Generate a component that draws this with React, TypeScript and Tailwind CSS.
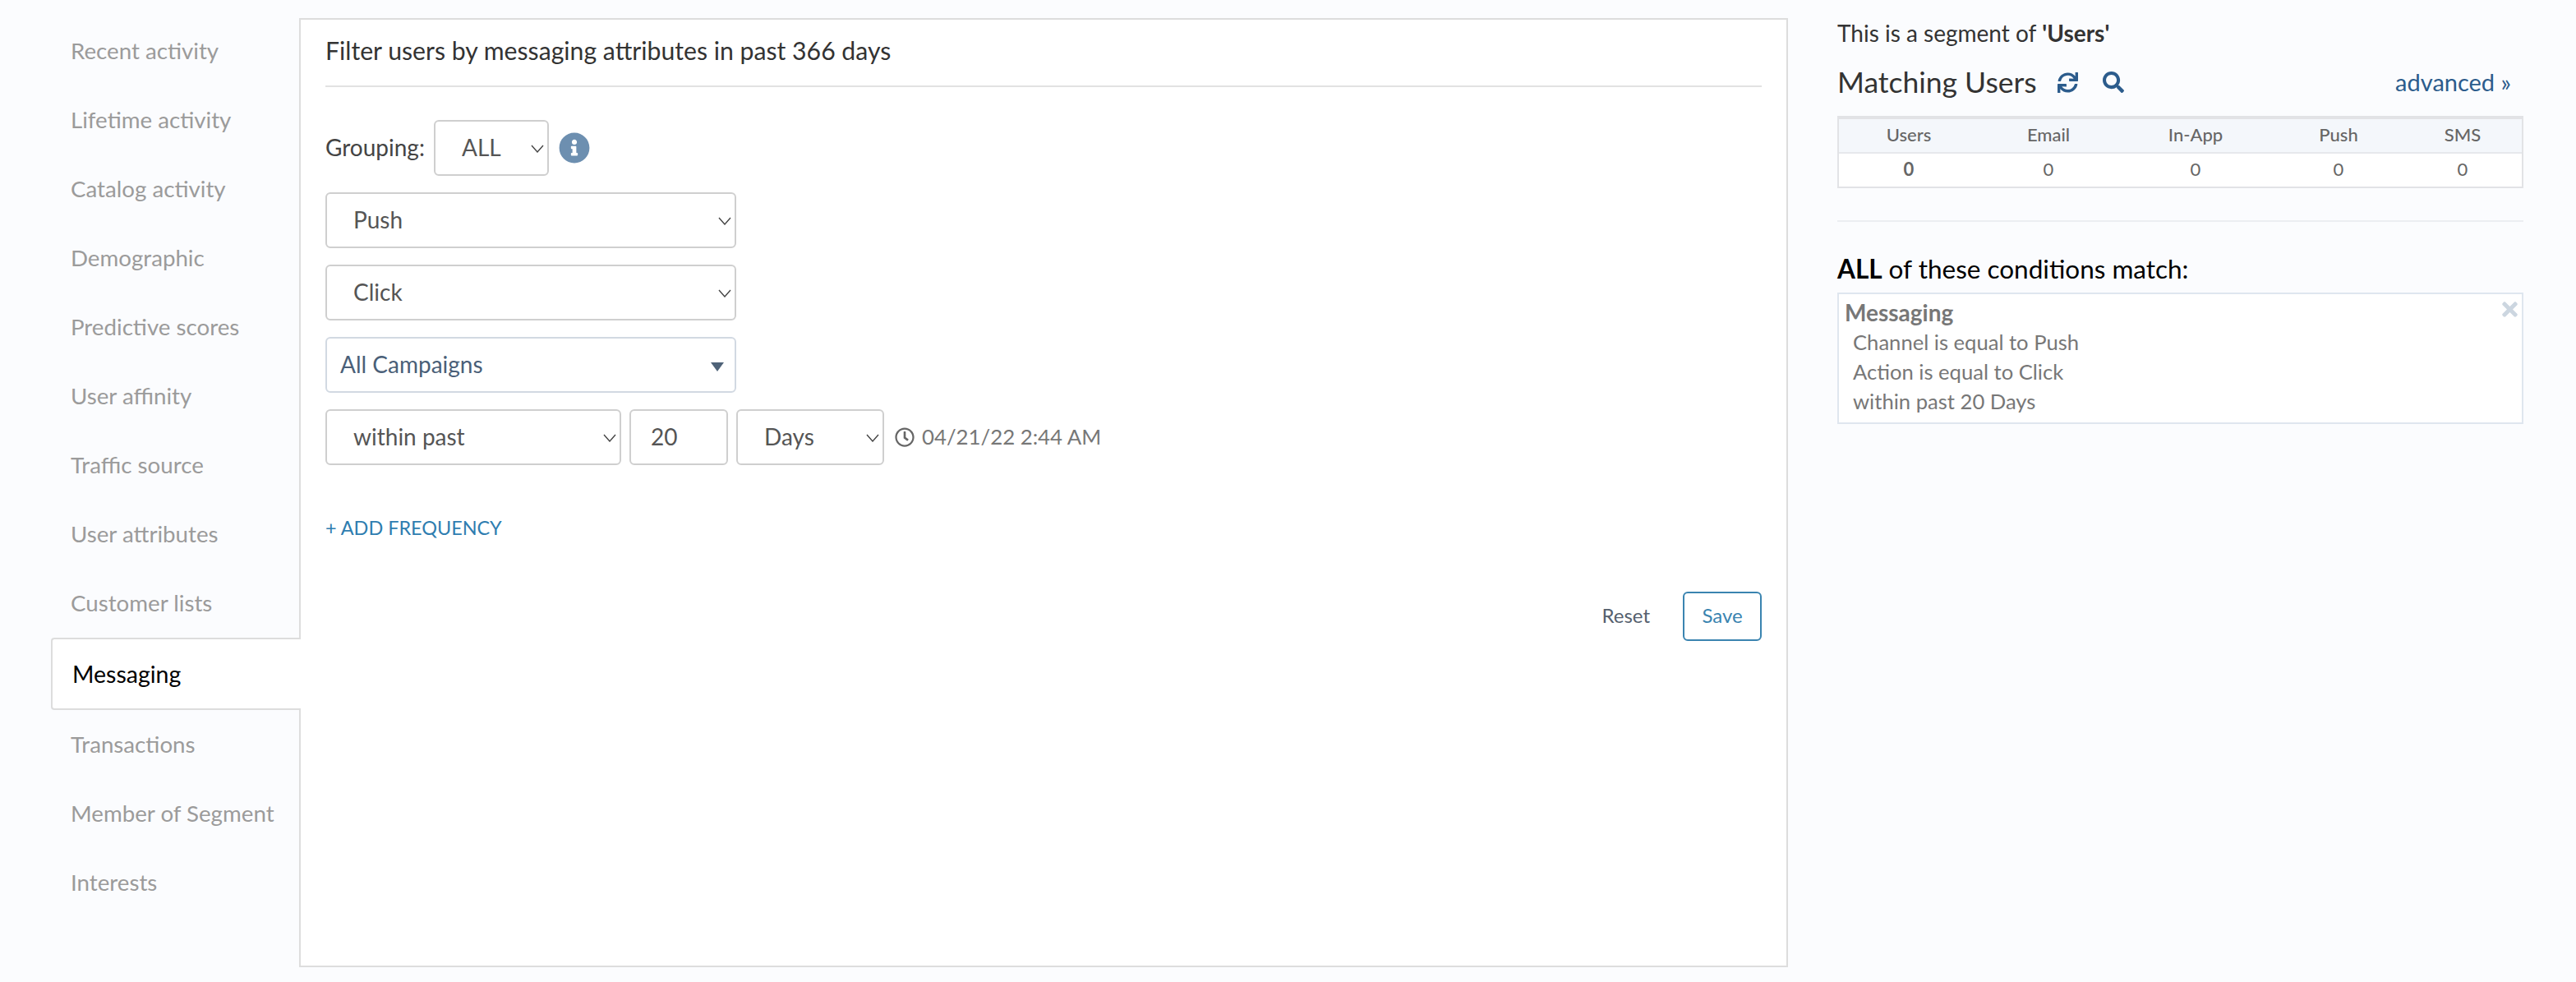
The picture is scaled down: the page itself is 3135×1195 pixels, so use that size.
// App.tsx
// Segment filter builder: category list, messaging filter form, matching users summary

import { FaInfoCircle, FaRegClock, FaSync, FaSearch, FaTimes } from 'react-icons/fa';

const categories = [
  'Recent activity',
  'Lifetime activity',
  'Catalog activity',
  'Demographic',
  'Predictive scores',
  'User affinity',
  'Traffic source',
  'User attributes',
  'Customer lists',
  'Messaging',
  'Transactions',
  'Member of Segment',
  'Interests',
];

const counts = [
  { label: 'Users', width: 'w-[170px]', bold: true },
  { label: 'Email', width: 'w-[170px]', bold: false },
  { label: 'In-App', width: 'w-[188px]', bold: false },
  { label: 'Push', width: 'w-[160px]', bold: false },
  { label: 'SMS', width: 'w-[142px]', bold: false },
];

function Select({ value, className }: { value: string; className: string }) {
  return (
    <div className={`relative h-[68px] shrink-0 ${className}`}>
      <select
        defaultValue={value}
        className="w-full h-full appearance-none bg-white border-2 border-[#cfcfcf] rounded-[6px] pl-[32px] pb-[2px] text-[28px] text-[#555555] outline-none"
      >
        <option>{value}</option>
      </select>
      <svg
        className="absolute right-[6px] top-[30px] w-[16px] h-[10px] pointer-events-none"
        viewBox="0 0 16 10"
        fill="none"
        stroke="#444444"
        strokeWidth="1.4"
      >
        <path d="M1 1l7 8 7-8" />
      </svg>
    </div>
  );
}

export default function App() {
  return (
    <div className="w-[3135px] h-[1195px] flex bg-[#fbfcfe] font-['Lato',sans-serif] overflow-hidden">
      {/* Category list */}
      <nav className="w-[364px] shrink-0 pl-[62px] pt-[20px]">
        {categories.map((name) =>
          name === 'Messaging' ? (
            <div
              key={name}
              className="relative z-10 h-[88px] -mr-[2px] flex items-center pl-[24px] bg-white border-2 border-r-0 border-[#dddddd] rounded-l-[4px] text-[28.5px] text-black"
            >
              {name}
            </div>
          ) : (
            <div key={name} className="h-[84px] pb-[1px] flex items-center pl-[24px] text-[27.7px] text-[#9b9b9b]">
              {name}
            </div>
          ),
        )}
      </nav>

      {/* Filter panel */}
      <main className="w-[1812px] h-[1155px] mt-[22px] shrink-0 bg-white border-2 border-[#dddddd] pl-[30px] pr-[30px]">
        <h2 className="h-[82px] flex items-center border-b-2 border-[#e2e2e2] text-[30.2px] font-normal text-[#333333] pb-[5px]">
          Filter users by messaging attributes in past 366 days
        </h2>

        <div className="mt-[40px] flex flex-col gap-[20px]">
          <div className="flex items-center">
            <span className="text-[28px] text-[#444444] w-[132px] pb-[2px]">Grouping:</span>
            <Select value="ALL" className="w-[140px]" />
            <FaInfoCircle className="ml-[12px] w-[38px] h-[38px] text-[#6d8fb0]" />
          </div>

          <Select value="Push" className="w-[500px]" />
          <Select value="Click" className="w-[500px]" />

          <div className="relative w-[500px] h-[68px] bg-white border-2 border-[#d2d9e2] rounded-[6px] flex items-center pl-[16px] pb-[2px] text-[28px] text-[#4a5f78]">
            All Campaigns
            <svg className="absolute right-[13px] top-[29px] w-[16px] h-[11px]" viewBox="0 0 16 11" fill="#4f6378">
              <path d="M0 0h16L8 11z" />
            </svg>
          </div>

          <div className="flex items-center">
            <Select value="within past" className="w-[360px]" />
            <input
              defaultValue="20"
              className="ml-[10px] w-[120px] h-[68px] bg-white border-2 border-[#cfcfcf] rounded-[6px] pl-[24px] pb-[2px] text-[28px] text-[#555555] outline-none"
            />
            <Select value="Days" className="ml-[10px] w-[180px]" />
            <FaRegClock className="ml-[13px] w-[24px] h-[24px] text-[#666666]" />
            <span className="ml-[9px] pb-[2px] text-[25.8px] text-[#777777]">04/21/22 2:44 AM</span>
          </div>
        </div>

        <button className="block mt-[60px] text-[23.4px] leading-[32px] text-[#2e7db0]">+ ADD FREQUENCY</button>

        <div className="mt-[62px] flex items-center justify-end">
          <button className="text-[24px] pb-[2px] text-[#55606e]">Reset</button>
          <button className="ml-[40px] w-[96px] h-[60px] pb-[2px] bg-white border-2 border-[#3a84b0] rounded-[6px] text-[24px] text-[#3a84b0]">
            Save
          </button>
        </div>
      </main>

      {/* Summary column */}
      <aside className="ml-[60px] w-[835px] shrink-0">
        <p className="mt-[22px] h-[36px] flex items-center text-[28px] text-[#333333] gap-[7px]">
          <span>This is a segment of</span>
          <b>'Users'</b>
        </p>

        <div className="mt-[22px] h-[40px] flex items-center">
          <h3 className="text-[35.5px] font-normal text-[#333333]">Matching Users</h3>
          <FaSync className="ml-[25px] w-[25px] h-[25px] text-[#2c5c8c]" />
          <FaSearch className="ml-[30px] w-[26px] h-[26px] text-[#2c5c8c]" />
          <a className="ml-auto mr-[15px] text-[29px] text-[#2c5c8c]">advanced »</a>
        </div>

        <div className="mt-[21px] border-2 border-t-4 border-[#e2e3e6] bg-white">
          <div className="flex h-[42px] pb-[4px] bg-[#f4f7fb] border-b-2 border-[#e6e8ec]">
            {counts.map((c) => (
              <div key={c.label} className={`${c.width} flex items-center justify-center text-[22px] font-medium text-[#666666]`}>
                {c.label}
              </div>
            ))}
          </div>
          <div className="flex h-[40px] pb-[4px]">
            {counts.map((c) => (
              <div
                key={c.label}
                className={`${c.width} flex items-center justify-center text-[22px] text-[#666666] ${c.bold ? 'font-bold' : ''}`}
              >
                0
              </div>
            ))}
          </div>
        </div>

        <div className="mt-[39px] border-t-2 border-[#eceef2]" />

        <p className="mt-[40px] h-[36px] flex items-center gap-[8px] text-[31.5px] text-black">
          <b>ALL</b>
          <span>of these conditions match:</span>
        </p>

        <div className="relative mt-[10px] h-[160px] bg-white border-2 border-[#dfe6ef] pl-[7px] pt-[4px]">
          <FaTimes className="absolute right-[5px] top-[5px] w-[19px] h-[27px] text-[#ccd6e0]" />
          <div className="h-[36px] flex items-center text-[28px] font-bold text-[#777777]">Messaging</div>
          <div className="pl-[10px] text-[25.6px] leading-[36px] text-[#777777]">
            <div>Channel is equal to Push</div>
            <div>Action is equal to Click</div>
            <div>within past 20 Days</div>
          </div>
        </div>
      </aside>
    </div>
  );
}
